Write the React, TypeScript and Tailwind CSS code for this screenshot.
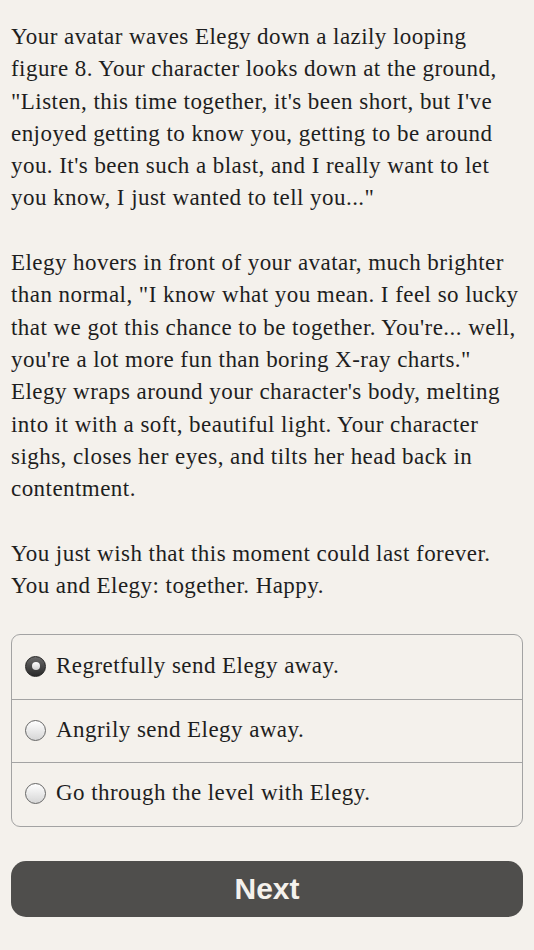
import { useState } from "react"

const choices = [
  "Regretfully send Elegy away.",
  "Angrily send Elegy away.",
  "Go through the level with Elegy.",
]

function Radio({ checked }: { checked: boolean }) {
  if (checked) {
    return (
      <span className="w-[21px] h-[21px] rounded-full bg-gradient-to-b from-[#6a6a6a] to-[#2a2a2a] border border-[#222] flex items-center justify-center shrink-0">
        <span className="w-[8px] h-[8px] rounded-full bg-gradient-to-b from-white to-[#cfcfcf]" />
      </span>
    )
  }
  return (
    <span className="w-[21px] h-[21px] rounded-full bg-gradient-to-b from-white to-[#d6d6d6] border border-[#666] shrink-0" />
  )
}

export default function App() {
  const [selected, setSelected] = useState(0)
  return (
    <div className="min-h-[950px] bg-[#f4f1ec] px-[11px] pt-[21px] text-[#1e1e1e] font-['Liberation_Serif',serif]">
      <div className="text-[23px] leading-[32.3px] tracking-[0.45px]">
        <p>
          Your avatar waves Elegy down a lazily looping<br />
          figure 8. Your character looks down at the ground,<br />
          "Listen, this time together, it's been short, but I've<br />
          enjoyed getting to know you, getting to be around<br />
          you. It's been such a blast, and I really want to let<br />
          you know, I just wanted to tell you..."
        </p>
        <p className="mt-[32.3px]">
          Elegy hovers in front of your avatar, much brighter<br />
          than normal, "I know what you mean. I feel so lucky<br />
          that we got this chance to be together. You're... well,<br />
          you're a lot more fun than boring X-ray charts."<br />
          Elegy wraps around your character's body, melting<br />
          into it with a soft, beautiful light. Your character<br />
          sighs, closes her eyes, and tilts her head back in<br />
          contentment.
        </p>
        <p className="mt-[32.3px]">
          You just wish that this moment could last forever.<br />
          You and Elegy: together. Happy.
        </p>
      </div>

      <div className="mt-[32px] border border-[#a3a3a3] rounded-[9px] overflow-hidden">
        {choices.map((c, i) => (
          <label
            key={c}
            onClick={() => setSelected(i)}
            className={
              "flex items-center gap-[10px] h-[63.5px] pb-[2px] pl-[13px] cursor-pointer " +
              (i > 0 ? "border-t border-[#a3a3a3]" : "")
            }
          >
            <Radio checked={selected === i} />
            <span className="text-[23px] tracking-[0.45px]">{c}</span>
          </label>
        ))}
      </div>

      <button className="mt-[34px] w-full h-[56px] rounded-[15px] bg-[#4f4e4c] text-[#f4f1ec] font-['Liberation_Sans',sans-serif] font-bold text-[30px] flex items-center justify-center">
        Next
      </button>
    </div>
  )
}
